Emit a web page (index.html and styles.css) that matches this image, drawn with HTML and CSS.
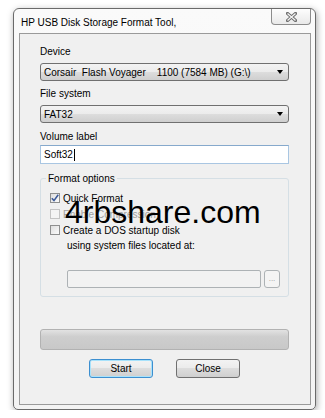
FILE: index.html
```html
<!DOCTYPE html>
<html lang="en">
<head>
    <meta charset="UTF-8">
    <title>HP USB Disk Storage Format Tool</title>
    <link rel="stylesheet" href="styles.css">
</head>
<body>

    <div class="window">
        <div class="titlebar">
            <span class="title">HP USB Disk Storage Format Tool,</span>
            <div class="close-btn">
                <svg width="11" height="10" viewBox="0 0 11 10">
                    <path d="M1.5 1.5 L9.5 8.5 M9.5 1.5 L1.5 8.5" stroke="#6d6d6d" stroke-width="3.2" stroke-linecap="square" fill="none"/>
                    <path d="M1.5 1.5 L9.5 8.5 M9.5 1.5 L1.5 8.5" stroke="#f4f4f4" stroke-width="1.3" fill="none"/>
                </svg>
            </div>
        </div>

        <div class="client">
            <div class="field-label first">Device</div>
            <div class="combo">
                <span class="combo-text">Corsair  Flash Voyager    1100 (7584 MB) (G:\)</span>
                <span class="arrow"></span>
            </div>

            <div class="field-label">File system</div>
            <div class="combo">
                <span class="combo-text">FAT32</span>
                <span class="arrow"></span>
            </div>

            <div class="field-label volume">Volume label</div>
            <div class="text-input">Soft32<span class="caret"></span></div>

            <fieldset class="group">
                <legend>Format options</legend>
                <div class="check-row">
                    <span class="check">
                        <svg width="8" height="8" viewBox="0 0 8 8">
                            <path d="M0.8 4.2 L3 6.6 L7.2 0.8" stroke="#3b5998" stroke-width="1.6" fill="none"/>
                        </svg>
                    </span>
                    Quick Format
                </div>
                <div class="check-row disabled">
                    <span class="check"></span>
                    Enable Compression
                </div>
                <div class="check-row">
                    <span class="check"></span>
                    Create a DOS startup disk
                </div>
                <div class="sub-label">using system files located at:</div>
                <div class="path-row">
                    <div class="path-input"></div>
                    <div class="browse">...</div>
                </div>
            </fieldset>

            <div class="progress"></div>

            <div class="buttons">
                <div class="btn default">Start</div>
                <div class="btn">Close</div>
            </div>
        </div>

        <!-- watermark stamped over the dialog -->
        <div class="watermark">4rbshare.com</div>
    </div>

</body>
</html>
```

FILE: styles.css
```css
body {
    margin: 0;
    background: #fff;
    font-family: 'Liberation Sans', Arial, sans-serif;
    font-size: 10px;
    color: #000;
}

.window {
    position: relative;
    margin: 8px 0 0 13px;
    width: 303px;
    height: 402px;
    box-sizing: border-box;
    border: 1px solid #6a6a6a;
    border-radius: 6px 6px 5px 5px;
    background: linear-gradient(#fafafa, #f3f3f3);
    box-shadow: 1px 2px 7px rgba(0, 0, 0, 0.35);
    padding: 0 4px 4px 5px;
    display: flex;
    flex-direction: column;
}

.titlebar {
    height: 24px;
    display: flex;
    justify-content: space-between;
    align-items: flex-start;
}

.title {
    padding-top: 8px;
    margin-left: 2px;
    font-size: 10px;
    line-height: 12px;
}

.close-btn {
    width: 40px;
    height: 16px;
    box-sizing: border-box;
    border: 1px solid #8c8c8c;
    border-top: none;
    border-radius: 0 0 4px 4px;
    background: linear-gradient(#fdfdfd, #e9e9e9);
    display: flex;
    align-items: center;
    justify-content: center;
}

.client {
    flex: 1;
    border: 1px solid #9a9a9a;
    background: #f0f0f0;
    padding: 0 21px 0 20px;
}

.field-label {
    line-height: 13px;
    margin-top: 6px;
    margin-bottom: 5px;
}

.field-label.first {
    margin-top: 11px;
}

.field-label.volume {
    margin-top: 7px;
    margin-bottom: 2px;
}

.combo {
    height: 18px;
    box-sizing: border-box;
    border: 1px solid #707070;
    border-radius: 3px;
    background: linear-gradient(#f3f3f3 0%, #ebebeb 50%, #dddddd 50%, #cfcfcf 100%);
    display: flex;
    align-items: center;
    justify-content: space-between;
    padding: 0 5px 0 3px;
}

.combo-text {
    white-space: pre;
}

.arrow {
    width: 0;
    height: 0;
    border-left: 3.5px solid transparent;
    border-right: 3.5px solid transparent;
    border-top: 4px solid #000;
}

.text-input {
    height: 19px;
    box-sizing: border-box;
    border: 1px solid #a9c6e2;
    border-top-color: #86a9cc;
    background: #fff;
    padding: 0 3px;
    line-height: 17px;
    display: flex;
    align-items: center;
}

.caret {
    display: inline-block;
    width: 1px;
    height: 12px;
    background: #000;
    margin-left: 1px;
}

.group {
    margin: 8px 0 0 0;
    padding: 0 8px 8px 9px;
    border: 1px solid #d5dfe5;
    border-radius: 3px;
    min-width: 0;
}

.group legend {
    padding: 0 2px;
    margin-left: -4px;
    line-height: 13px;
}

.check-row {
    height: 16px;
    display: flex;
    align-items: center;
    gap: 3px;
}

.check-row:first-of-type {
    margin-top: 5px;
}

.check {
    width: 10px;
    height: 10px;
    box-sizing: border-box;
    border: 1px solid #8e8f8f;
    background: linear-gradient(135deg, #dedede, #fbfbfb);
    display: flex;
    align-items: center;
    justify-content: center;
}

.check-row.disabled {
    color: #a0a0a0;
}

.check-row.disabled .check {
    border-color: #c4c4c4;
    background: #f4f4f4;
}

.sub-label {
    height: 16px;
    line-height: 16px;
    padding-left: 17px;
}

.path-row {
    margin-top: 16px;
    margin-left: 17px;
    display: flex;
    gap: 3px;
}

.path-input {
    flex: 1;
    height: 18px;
    box-sizing: border-box;
    border: 1px solid #adb2b5;
    border-radius: 2px;
    background: #f2f2f2;
}

.browse {
    width: 16px;
    height: 18px;
    box-sizing: border-box;
    border: 1px solid #adb2b5;
    border-radius: 3px;
    background: #f4f4f4;
    color: #9a9a9a;
    font-size: 8px;
    text-align: center;
    line-height: 16px;
}

.progress {
    margin-top: 32px;
    height: 21px;
    box-sizing: border-box;
    border: 1px solid #b2b2b2;
    border-radius: 3px;
    background: linear-gradient(#e2e2e2 0%, #cecece 35%, #c8c8c8 100%);
}

.buttons {
    margin-top: 9px;
    display: flex;
    justify-content: center;
    gap: 23px;
}

.btn {
    width: 64px;
    height: 19px;
    box-sizing: border-box;
    border: 1px solid #707070;
    border-radius: 3px;
    background: linear-gradient(#f3f3f3 0%, #ebebeb 50%, #dddddd 50%, #cfcfcf 100%);
    text-align: center;
    line-height: 17px;
}

.btn.default {
    border-color: #3c8fd0;
    box-shadow: inset 0 0 0 1px #a8e2fb;
}

.watermark {
    position: absolute;
    left: 51px;
    top: 187px;
    font-family: 'Liberation Sans', Arial, sans-serif;
    font-size: 32px;
    line-height: 32px;
    color: #000;
    pointer-events: none;
}
```
